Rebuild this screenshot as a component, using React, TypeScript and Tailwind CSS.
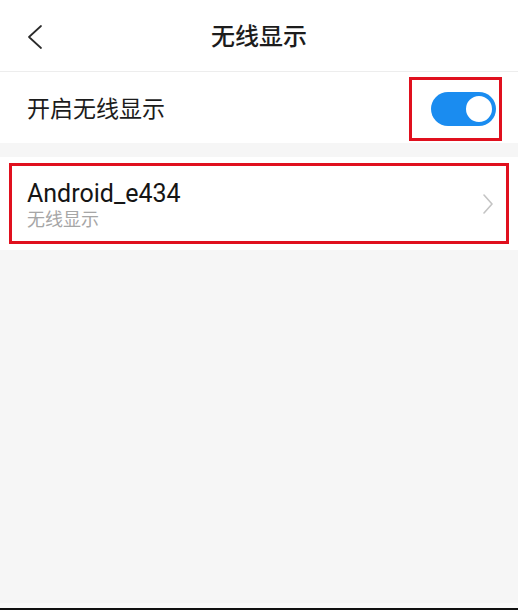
export default function App() {
  return (
    <main
      className="w-[518px] h-[610px] bg-[#f6f6f6] flex flex-col text-[#1c1c1c]"
      style={{ fontFamily: 'Roboto, "Noto Sans CJK SC", sans-serif' }}
    >
      {/* header */}
      <header className="h-[72px] bg-white flex items-center relative border-b border-[#ededed]">
        <svg className="absolute left-[27px] top-[25px]" width="16" height="24" viewBox="0 0 16 24" fill="none">
          <polyline points="14,1 2,12 14,23" stroke="#2a2a2a" strokeWidth="1.7" strokeLinejoin="round" strokeLinecap="round" />
        </svg>
        <h1 className="w-full text-center text-[24px] font-medium pt-[2px]">无线显示</h1>
      </header>

      {/* switch row */}
      <div className="h-[71px] bg-white flex items-center justify-between pl-[27px] pr-[16px]">
        <span className="text-[23px] pt-[6px]">开启无线显示</span>
        <div className="w-[93px] h-[64px] border-[3px] border-[#e0101e] flex items-center justify-end pr-[3px] mt-[3px]">
          <div className="w-[65px] h-[34px] rounded-full bg-[#1a8cf0] flex items-center justify-end pr-[2px]">
            <div className="w-[30px] h-[30px] rounded-full bg-white border-[2px] border-[#1a8cf0]" />
          </div>
        </div>
      </div>

      <div className="h-[14px]" />

      {/* device card */}
      <div className="bg-white px-[9px] py-[6px]">
        <div className="h-[81px] border-[3px] border-[#e0101e] flex items-center justify-between pl-[15px] pr-[12px]">
          <div className="flex flex-col pt-[2px]">
            <span className="text-[25px] leading-[30px] text-[#151515]">Android_e434</span>
            <span className="text-[18px] leading-[22px] text-[#a6a6a6]">无线显示</span>
          </div>
          <svg width="12" height="20" viewBox="0 0 12 20" fill="none">
            <polyline points="2,1 10,10 2,19" stroke="#c4c4c4" strokeWidth="1.6" strokeLinejoin="round" strokeLinecap="round" />
          </svg>
        </div>
      </div>

      <div className="flex-1" />
      <div className="h-[5px] bg-[#fafafa]" />
      <div className="h-[2px] bg-[#111]" />
    </main>
  );
}
